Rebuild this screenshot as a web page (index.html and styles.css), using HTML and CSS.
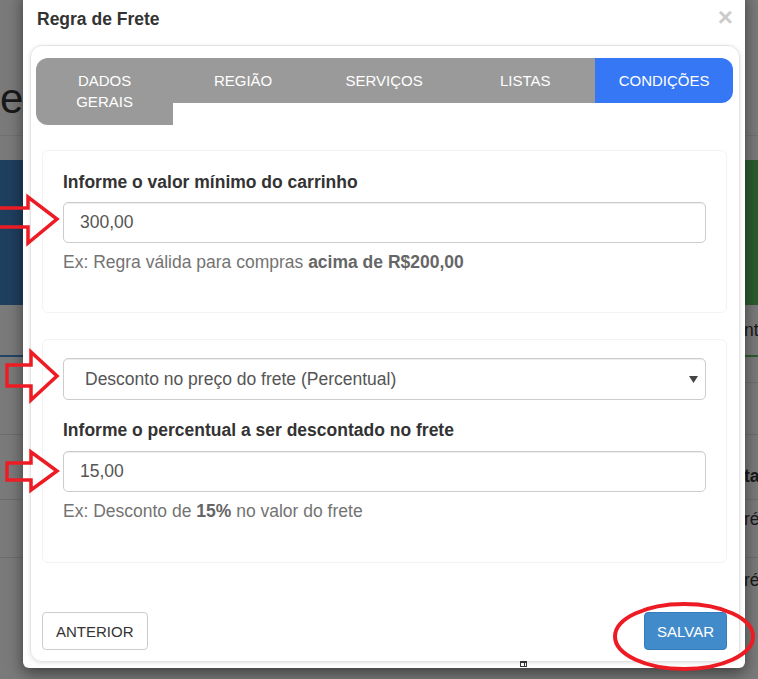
FILE: index.html
```html
<!DOCTYPE html>
<html lang="pt-BR">
<head>
<meta charset="utf-8">
<title>Regra de Frete</title>
<link rel="stylesheet" href="styles.css">
</head>
<body>
<div class="page">
  <div class="page-title"><span>e</span></div>
  <div class="bands">
    <div class="band band-blue"></div>
    <div class="band-gap"></div>
    <div class="band band-green"></div>
  </div>
  <div class="bg-row row-a"><div class="cell-l line-blue"></div><div class="cell-r line-green">nto</div></div>
  <div class="bg-row row-b"><div class="cell-l"></div><div class="cell-r line"></div></div>
  <div class="bg-row row-c"><div class="cell-l line"></div><div class="cell-r line"></div></div>
  <div class="bg-row row-d"><div class="cell-l line"></div><div class="cell-r line strong">tatus</div></div>
  <div class="bg-row row-e"><div class="cell-l line"></div><div class="cell-r line">ré</div></div>
  <div class="bg-row row-f"><div class="cell-l"></div><div class="cell-r">ré</div></div>
</div>
<div class="backdrop"></div>

<div class="modal">
  <div class="modal-header">
    <h4 class="modal-title">Regra de Frete</h4>
    <button class="close" type="button">×</button>
  </div>
  <div class="card">
    <ul class="tabs">
      <li class="tab tab-first">DADOS GERAIS</li>
      <li class="tab">REGIÃO</li>
      <li class="tab tab-wide">SERVIÇOS</li>
      <li class="tab">LISTAS</li>
      <li class="tab active">CONDIÇÕES</li>
    </ul>
    <div class="panel">
      <section class="box box-first">
        <label class="lbl">Informe o valor mínimo do carrinho</label>
        <input class="field" type="text" value="300,00">
        <p class="help">Ex: Regra válida para compras <b>acima de R$200,00</b></p>
      </section>
      <section class="box box-second">
        <div class="select-wrap">
          <select class="field select"><option>Desconto no preço do frete (Percentual)</option></select>
          <svg class="caret" width="9" height="7" viewBox="0 0 9 7"><polygon points="0,0 9,0 4.5,7" fill="#444"/></svg>
        </div>
        <label class="lbl">Informe o percentual a ser descontado no frete</label>
        <input class="field" type="text" value="15,00">
        <p class="help">Ex: Desconto de <b>15%</b> no valor do frete</p>
      </section>
      <div class="footer">
        <button class="btn" type="button">ANTERIOR</button>
        <button class="btn btn-primary" type="button">SALVAR</button>
      </div>
    </div>
  </div>
  <svg class="handle" width="7" height="6" viewBox="0 0 7 6"><rect x="0.5" y="0.5" width="6" height="5" fill="none" stroke="#333"/><rect x="0" y="0" width="7" height="2" fill="#333"/><line x1="4.5" y1="1" x2="4.5" y2="6" stroke="#333"/></svg>
</div>

<svg class="annotations" width="758" height="679" viewBox="0 0 758 679">
  <g fill="none" stroke="#ed1c24" stroke-width="3.5" stroke-linejoin="miter">
    <polyline points="-6,208 28,208 28,197 57,219 28,243 28,227 -6,227"/>
    <polygon points="7,365 31,365 31,352 57,376 31,400 31,386 7,386"/>
    <polygon points="7,463 31,463 31,452 57,471 31,490 31,480 7,480"/>
    <ellipse cx="684" cy="636.5" rx="69" ry="32.5" stroke-width="4"/>
  </g>
</svg>
</body>
</html>
```

FILE: styles.css
```css
* { box-sizing: border-box; }
html, body {
  margin: 0;
  width: 758px;
  height: 679px;
  overflow: hidden;
}
body {
  position: relative;
  background: #f5f5f5;
  font-family: "Liberation Sans", Arial, sans-serif;
  color: #333;
}

/* page behind the modal */
.page { width: 758px; }
.page-title {
  height: 136px;
  border-bottom: 1px solid #e2e2e2;
  padding-top: 78px;
  font-size: 42px;
  line-height: 1;
  color: #333;
}
.bands {
  display: flex;
  height: 145px;
  margin-top: 24px;
}
.band { width: 300px; }
.band-gap { flex: 1; }
.band-blue { background: #3e7ebe; }
.band-green { background: #5ab85e; }
.bg-row { display: flex; }
.cell-l { width: 744px; flex: none; }
.cell-r {
  flex: 1;
  white-space: nowrap;
  font-size: 17.5px;
  line-height: 25px;
  color: #333;
}
.line { border-bottom: 1px solid #d8d8d8; }
.line-blue { border-bottom: 2px solid #428bca; }
.line-green { border-bottom: 2px solid #5cb85c; }
.strong { font-weight: bold; }
.row-a { height: 52px; }
.row-a .cell-r { padding-top: 13px; }
.row-b { height: 26px; }
.row-c { height: 52px; }
.row-d { height: 65px; }
.row-d .cell-r { padding-top: 29px; }
.row-e { height: 58px; }
.row-e .cell-r { padding-top: 7px; }
.row-f { height: 121px; }
.row-f .cell-r { padding-top: 10px; }

.backdrop {
  position: absolute;
  inset: 0;
  background: rgba(0, 0, 0, 0.5);
}

/* modal */
.modal {
  position: absolute;
  left: 23px;
  top: -10px;
  width: 722px;
  background: #fff;
  border-radius: 6px;
  box-shadow: 0 5px 15px rgba(0, 0, 0, 0.5);
  padding-bottom: 6px;
}
.modal-header {
  display: flex;
  justify-content: space-between;
  align-items: flex-start;
  padding: 17px 12px 13px 14px;
}
.modal-title {
  margin: 0;
  font-size: 17.5px;
  line-height: 25px;
  font-weight: bold;
  color: #333;
}
.close {
  margin-top: -3px;
  padding: 0;
  border: 0;
  background: none;
  font-family: "Liberation Sans", Arial, sans-serif;
  font-size: 26px;
  font-weight: bold;
  line-height: 1;
  color: #000;
  opacity: 0.2;
}

.card {
  margin: 0 5px 0 7px;
  border: 1px solid #e4e4e4;
  border-radius: 12px;
  box-shadow: 0 1px 4px rgba(0, 0, 0, 0.12);
  padding: 12px 6px 11px 5px;
}

.tabs {
  display: flex;
  align-items: flex-start;
  list-style: none;
  margin: 0;
  padding: 0;
}
.tab {
  flex: 140 1 0;
  min-width: 0;
  background: #9a9a9a;
  color: #fff;
  font-size: 15px;
  line-height: 21px;
  padding: 12px 20px;
  text-align: center;
}
.tab-first {
  flex-grow: 136;
  border-radius: 12px 0 0 12px;
  padding-bottom: 13px;
}
.tab-wide { flex-grow: 143; }
.tab.active {
  flex-grow: 137;
  background: #3677f5;
  border-radius: 0 12px 12px 0;
}

.panel { padding: 0 6px; }
.box {
  border: 1px solid #f3f3f3;
  border-radius: 6px;
  padding: 19px 20px 37px;
}
.box-first { margin-top: 25px; }
.box-second {
  margin-top: 26px;
  padding-top: 18px;
  padding-bottom: 38px;
}
.lbl {
  display: block;
  font-size: 17.5px;
  line-height: 25px;
  font-weight: bold;
  color: #333;
  margin-bottom: 7px;
}
.box-second .lbl { margin-bottom: 8px; }
.field {
  display: block;
  width: 100%;
  height: 41px;
  margin: 0;
  border: 1px solid #ccc;
  border-radius: 5px;
  padding: 0 16px;
  background: #fff;
  font-family: "Liberation Sans", Arial, sans-serif;
  font-size: 17.5px;
  color: #555;
  box-shadow: inset 0 1px 1px rgba(0, 0, 0, 0.075);
}
.select-wrap {
  position: relative;
  margin-bottom: 18px;
}
.select {
  height: 42px;
  padding-left: 21px;
  -webkit-appearance: none;
  appearance: none;
}
.caret {
  position: absolute;
  right: 8px;
  top: 18px;
  display: block;
}
.help {
  margin: 7px 0 0;
  font-size: 17.5px;
  line-height: 25px;
  color: #737373;
}
.help b { color: #666; }

.footer {
  display: flex;
  justify-content: space-between;
  margin-top: 49px;
}
.btn {
  height: 38px;
  padding: 0 13px;
  border: 1px solid #ccc;
  border-radius: 4px;
  background: #fff;
  color: #333;
  font-family: "Liberation Sans", Arial, sans-serif;
  font-size: 15px;
}
.btn-primary {
  padding: 0 12px;
  background: #428bca;
  border-color: #357ebd;
  color: #fff;
}

.handle {
  position: absolute;
  left: 497px;
  bottom: 1px;
  display: block;
}

.annotations {
  position: absolute;
  left: 0;
  top: 0;
  pointer-events: none;
}
```
